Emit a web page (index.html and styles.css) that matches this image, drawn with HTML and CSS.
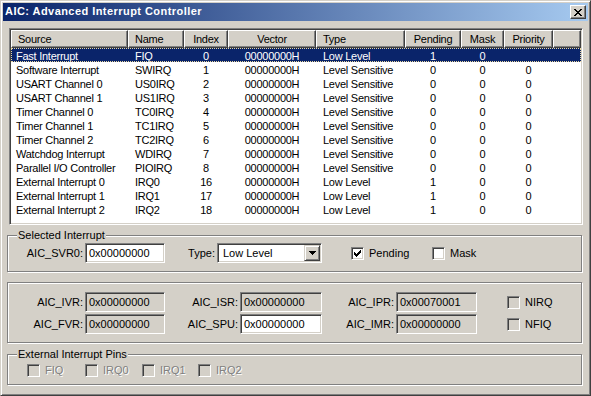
FILE: index.html
```html
<!DOCTYPE html>
<html lang="en">
<head>
  <meta charset="UTF-8" />
  <title>AIC: Advanced Interrupt Controller</title>
  <link rel="stylesheet" href="styles.css">
</head>
<body>
  <div class="window">
    <!-- title bar -->
    <div class="titlebar">
      <span class="title">AIC: Advanced Interrupt Controller</span>
      <span class="close-btn">
        <svg width="8" height="7" viewBox="0 0 8 7" shape-rendering="crispEdges">
          <path d="M0 0h2v1H0zM6 0h2v1H6zM1 1h2v1H1zM5 1h2v1H5zM2 2h4v1H2zM3 3h2v1H3zM2 4h4v1H2zM1 5h2v1H1zM5 5h2v1H5zM0 6h2v1H0zM6 6h2v1H6z" fill="#000"/>
        </svg>
      </span>
    </div>

    <div class="client">
      <!-- interrupt list -->
      <div class="listview">
        <div class="lv-head">
          <div class="hd left">Source</div>
          <div class="hd left">Name</div>
          <div class="hd">Index</div>
          <div class="hd">Vector</div>
          <div class="hd left">Type</div>
          <div class="hd">Pending</div>
          <div class="hd">Mask</div>
          <div class="hd">Priority</div>
          <div class="hd"></div>
        </div>
        <div class="lv-row selected">
          <div class="src">Fast Interrupt</div><div class="nm">FIQ</div><div>0</div><div>00000000H</div><div class="nm">Low Level</div><div>1</div><div>0</div><div></div>
        </div>
        <div class="lv-row">
          <div class="src">Software Interrupt</div><div class="nm">SWIRQ</div><div>1</div><div>00000000H</div><div class="nm">Level Sensitive</div><div>0</div><div>0</div><div>0</div>
        </div>
        <div class="lv-row">
          <div class="src">USART Channel 0</div><div class="nm">US0IRQ</div><div>2</div><div>00000000H</div><div class="nm">Level Sensitive</div><div>0</div><div>0</div><div>0</div>
        </div>
        <div class="lv-row">
          <div class="src">USART Channel 1</div><div class="nm">US1IRQ</div><div>3</div><div>00000000H</div><div class="nm">Level Sensitive</div><div>0</div><div>0</div><div>0</div>
        </div>
        <div class="lv-row">
          <div class="src">Timer Channel 0</div><div class="nm">TC0IRQ</div><div>4</div><div>00000000H</div><div class="nm">Level Sensitive</div><div>0</div><div>0</div><div>0</div>
        </div>
        <div class="lv-row">
          <div class="src">Timer Channel 1</div><div class="nm">TC1IRQ</div><div>5</div><div>00000000H</div><div class="nm">Level Sensitive</div><div>0</div><div>0</div><div>0</div>
        </div>
        <div class="lv-row">
          <div class="src">Timer Channel 2</div><div class="nm">TC2IRQ</div><div>6</div><div>00000000H</div><div class="nm">Level Sensitive</div><div>0</div><div>0</div><div>0</div>
        </div>
        <div class="lv-row">
          <div class="src">Watchdog Interrupt</div><div class="nm">WDIRQ</div><div>7</div><div>00000000H</div><div class="nm">Level Sensitive</div><div>0</div><div>0</div><div>0</div>
        </div>
        <div class="lv-row">
          <div class="src">Parallel I/O Controller</div><div class="nm">PIOIRQ</div><div>8</div><div>00000000H</div><div class="nm">Level Sensitive</div><div>0</div><div>0</div><div>0</div>
        </div>
        <div class="lv-row">
          <div class="src">External Interrupt 0</div><div class="nm">IRQ0</div><div>16</div><div>00000000H</div><div class="nm">Low Level</div><div>1</div><div>0</div><div>0</div>
        </div>
        <div class="lv-row">
          <div class="src">External Interrupt 1</div><div class="nm">IRQ1</div><div>17</div><div>00000000H</div><div class="nm">Low Level</div><div>1</div><div>0</div><div>0</div>
        </div>
        <div class="lv-row">
          <div class="src">External Interrupt 2</div><div class="nm">IRQ2</div><div>18</div><div>00000000H</div><div class="nm">Low Level</div><div>1</div><div>0</div><div>0</div>
        </div>
      </div>

      <!-- selected interrupt -->
      <fieldset class="group group-sel">
        <legend>Selected Interrupt</legend>
        <div class="sel-row">
          <span class="lbl lbl-svr">AIC_SVR0:</span>
          <span class="edit edit-svr">0x00000000</span>
          <span class="lbl lbl-type">Type:</span>
          <span class="combo">
            <span class="combo-text">Low Level</span>
            <span class="combo-btn">
              <svg width="7" height="4" viewBox="0 0 7 4" shape-rendering="crispEdges">
                <path d="M0 0h7v1H0zM1 1h5v1H1zM2 2h3v1H2zM3 3h1v1H3z" fill="#000"/>
              </svg>
            </span>
          </span>
          <span class="opt opt-pending">
            <span class="check white">
              <svg width="7" height="7" viewBox="0 0 7 7" shape-rendering="crispEdges">
                <path d="M6 0h1v1H6zM5 1h2v1H5zM0 2h1v1H0zM4 2h3v1H4zM0 3h2v1H0zM3 3h3v1H3zM0 4h5v1H0zM1 5h3v1H1zM2 6h1v1H2z" fill="#000"/>
              </svg>
            </span>
            <span>Pending</span>
          </span>
          <span class="opt">
            <span class="check white"></span>
            <span>Mask</span>
          </span>
        </div>
      </fieldset>

      <!-- registers -->
      <fieldset class="group group-regs">
        <div class="reg-grid">
          <span class="lbl">AIC_IVR:</span>
          <span class="edit ro">0x00000000</span>
          <span class="lbl">AIC_ISR:</span>
          <span class="edit ro">0x00000000</span>
          <span class="lbl">AIC_IPR:</span>
          <span class="edit ro">0x00070001</span>
          <span class="opt opt-reg"><span class="check"></span><span>NIRQ</span></span>

          <span class="lbl">AIC_FVR:</span>
          <span class="edit ro">0x00000000</span>
          <span class="lbl">AIC_SPU:</span>
          <span class="edit">0x00000000</span>
          <span class="lbl">AIC_IMR:</span>
          <span class="edit ro">0x00000000</span>
          <span class="opt opt-reg"><span class="check"></span><span>NFIQ</span></span>
        </div>
      </fieldset>

      <!-- external pins -->
      <fieldset class="group group-pins">
        <legend>External Interrupt Pins</legend>
        <div class="pins-row">
          <span class="opt pin pin-fiq"><span class="check"></span><span class="disabled">FIQ</span></span>
          <span class="opt pin pin-0"><span class="check"></span><span class="disabled">IRQ0</span></span>
          <span class="opt pin pin-1"><span class="check"></span><span class="disabled">IRQ1</span></span>
          <span class="opt pin"><span class="check"></span><span class="disabled">IRQ2</span></span>
        </div>
      </fieldset>
    </div>
  </div>
</body>
</html>
```

FILE: styles.css
```css
:root {
  --face: #d4d0c8;
  --shadow: #808080;
  --dark: #404040;
  --light: #ffffff;
  --select: #0a246a;
}

html, body {
  margin: 0;
  padding: 0;
}

body {
  background: var(--face);
  font-family: "Liberation Sans", Arial, sans-serif;
  font-size: 11px;
  color: #000;
}

.window {
  width: 591px;
  height: 396px;
  box-sizing: border-box;
  border: 1px solid;
  border-color: var(--face) var(--dark) var(--dark) var(--face);
  box-shadow: inset 1px 1px 0 var(--light), inset -1px -1px 0 var(--shadow);
  padding: 2px;
  display: flex;
  flex-direction: column;
}

/* title bar */
.titlebar {
  height: 18px;
  flex: none;
  display: flex;
  align-items: center;
  justify-content: space-between;
  background: linear-gradient(to right, #0a246a, #a6caf0);
}

.title {
  align-self: flex-start;
  padding-left: 2px;
  padding-top: 1px;
  line-height: 15px;
  color: #fff;
  font-weight: bold;
  letter-spacing: 0.45px;
}

.close-btn {
  width: 16px;
  height: 14px;
  margin-right: 2px;
  box-sizing: border-box;
  background: var(--face);
  border: 1px solid;
  border-color: var(--light) var(--dark) var(--dark) var(--light);
  box-shadow: inset -1px -1px 0 var(--shadow);
  display: flex;
  align-items: center;
  justify-content: center;
  padding-right: 1px;
}

.close-btn svg {
  display: block;
}

.client {
  flex: 1;
  display: flex;
  flex-direction: column;
}

/* list view */
.listview {
  margin: 7px 5px 0 6px;
  height: 197px;
  box-sizing: border-box;
  background: #fff;
  border: 1px solid;
  border-color: var(--shadow) var(--light) var(--light) var(--shadow);
  box-shadow: inset 1px 1px 0 var(--dark), inset -1px -1px 0 var(--face);
  padding: 1px;
  flex: none;
}

.lv-head,
.lv-row {
  display: grid;
  grid-template-columns: 117px 56px 44px 88px 89px 56px 43px 49px;
  letter-spacing: -0.25px;
}

.lv-head {
  grid-template-columns: 117px 56px 44px 88px 89px 56px 43px 49px 1fr;
  height: 18px;
}

.hd {
  box-sizing: border-box;
  background: var(--face);
  border: 1px solid;
  border-color: var(--light) var(--dark) var(--dark) var(--light);
  box-shadow: inset -1px -1px 0 var(--shadow);
  text-align: center;
  padding-top: 1px;
  line-height: 15px;
  white-space: nowrap;
  overflow: hidden;
}

.hd.left {
  text-align: left;
  padding-left: 6px;
}

.lv-row {
  height: 14px;
}

.lv-row > div {
  box-sizing: border-box;
  height: 14px;
  padding-top: 2px;
  text-align: center;
  line-height: 12px;
  white-space: nowrap;
  overflow: hidden;
}

.lv-row > div.src {
  text-align: left;
  padding-left: 5px;
}

.lv-row > div.nm {
  text-align: left;
  padding-left: 7px;
}

.lv-row.selected {
  background: var(--select);
  color: #fff;
  outline: 1px dotted #e8d7a0;
  outline-offset: -1px;
}

/* group boxes */
.group {
  margin: 0 6px 0 4px;
  padding: 0;
  border: 1px solid var(--shadow);
  box-shadow: 1px 1px 0 var(--light), inset 1px 1px 0 var(--light);
  min-width: 0;
}

.group legend {
  margin-left: 9px;
  padding: 0 1px;
  line-height: 13px;
  background: var(--face);
}

.group-sel {
  margin-top: 4px;
  padding: 1px 0 8px 0;
}

.group-regs {
  margin-top: 10px;
  padding: 9px 0 8px 0;
}

.group-pins {
  margin-top: 5px;
  padding: 2px 0 7px 0;
}

.sel-row {
  display: flex;
  align-items: center;
  height: 20px;
}

.lbl {
  box-sizing: border-box;
  text-align: right;
  padding-right: 2px;
  white-space: nowrap;
}

.lbl-svr {
  width: 77px;
}

.lbl-type {
  width: 52px;
}

.edit {
  box-sizing: border-box;
  height: 20px;
  background: #fff;
  border: 1px solid;
  border-color: var(--shadow) var(--light) var(--light) var(--shadow);
  box-shadow: inset 1px 1px 0 var(--dark), inset -1px -1px 0 var(--face);
  padding-left: 3px;
  line-height: 18px;
  white-space: nowrap;
  overflow: hidden;
}

.edit.ro {
  background: var(--face);
}

.edit-svr {
  width: 80px;
}

.combo {
  width: 105px;
  height: 20px;
  box-sizing: border-box;
  background: #fff;
  border: 1px solid;
  border-color: var(--shadow) var(--light) var(--light) var(--shadow);
  box-shadow: inset 1px 1px 0 var(--dark), inset -1px -1px 0 var(--face);
  padding: 1px;
  display: flex;
}

.combo-text {
  flex: 1;
  padding-left: 4px;
  line-height: 16px;
}

.combo-btn {
  width: 16px;
  height: 16px;
  box-sizing: border-box;
  background: var(--face);
  border: 1px solid;
  border-color: var(--face) var(--dark) var(--dark) var(--face);
  box-shadow: inset 1px 1px 0 var(--light), inset -1px -1px 0 var(--shadow);
  display: flex;
  align-items: center;
  justify-content: center;
}

.combo-btn svg {
  display: block;
}

/* check boxes */
.opt {
  display: flex;
  align-items: center;
  gap: 5px;
  white-space: nowrap;
}

.check {
  width: 13px;
  height: 13px;
  box-sizing: border-box;
  background: var(--face);
  border: 1px solid;
  border-color: var(--shadow) var(--light) var(--light) var(--shadow);
  box-shadow: inset 1px 1px 0 var(--dark), inset -1px -1px 0 var(--face);
  display: flex;
  align-items: center;
  justify-content: center;
  flex: none;
}

.check.white {
  background: #fff;
}

.check svg {
  display: block;
}

.opt-pending {
  margin-left: 29px;
  width: 81px;
}

.reg-grid {
  display: grid;
  grid-template-columns: 77px 80px 75px 82px 74px 81px 1fr;
  grid-auto-rows: 20px;
  row-gap: 2px;
  align-items: center;
}

.opt-reg {
  padding-left: 30px;
}

.pins-row {
  display: flex;
  align-items: center;
  height: 14px;
  padding-left: 19px;
}

.pin-fiq {
  width: 58px;
}

.pin-0 {
  width: 57px;
}

.pin-1 {
  width: 56px;
}

.disabled {
  color: var(--shadow);
  text-shadow: 1px 1px 0 var(--light);
}
```
